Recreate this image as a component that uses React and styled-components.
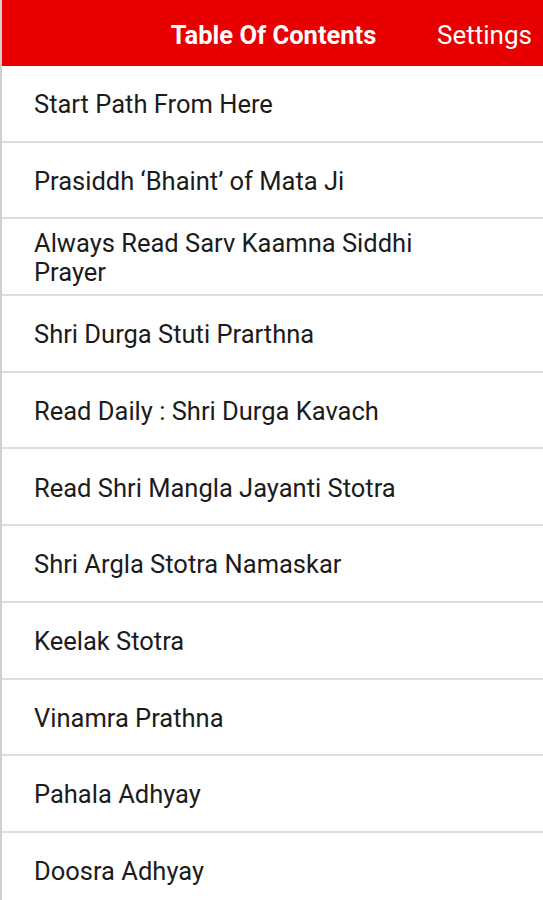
import React from 'react';
import styled, { createGlobalStyle } from 'styled-components';

const items = [
  'Start Path From Here',
  'Prasiddh \u2018Bhaint\u2019 of Mata Ji',
  'Always Read Sarv Kaamna Siddhi Prayer',
  'Shri Durga Stuti Prarthna',
  'Read Daily : Shri Durga Kavach',
  'Read Shri Mangla Jayanti Stotra',
  'Shri Argla Stotra Namaskar',
  'Keelak Stotra',
  'Vinamra Prathna',
  'Pahala Adhyay',
  'Doosra Adhyay',
];

const App = () => (
  <Screen>
    <GlobalStyle />
    <Header>
      <Title>Table Of Contents</Title>
      <SettingsLink>Settings</SettingsLink>
    </Header>
    <List>
      {items.map((item) => (
        <Row key={item}>
          <RowText>{item}</RowText>
        </Row>
      ))}
    </List>
  </Screen>
);

const GlobalStyle = createGlobalStyle`
  body {
    margin: 0;
    background: #fff;
    font-family: Roboto, "Liberation Sans", sans-serif;
    overflow: hidden;
  }
`;

const Screen = styled.div`
  width: 543px;
  height: 900px;
  overflow: hidden;
  border-left: 2px solid #cfcfcf;
  box-sizing: border-box;
`;

const Header = styled.div`
  position: relative;
  height: 66px;
  padding-top: 3px;
  box-sizing: border-box;
  background: #e80000;
  display: flex;
  align-items: center;
  justify-content: center;
  color: #fff;
`;

const Title = styled.div`
  font-size: 25.5px;
  font-weight: 700;
  margin-left: 2px;
`;

const SettingsLink = styled.div`
  position: absolute;
  right: 11px;
  top: 50%;
  transform: translateY(-45%);
  font-size: 26px;
  font-weight: 400;
`;

const List = styled.div`
  display: flex;
  flex-direction: column;
`;

const Row = styled.div`
  height: 76.7px;
  box-sizing: border-box;
  display: flex;
  align-items: center;
  padding: 3px 32px 0;
  border-bottom: 2px solid #dedede;
`;

const RowText = styled.div`
  font-size: 25.5px;
  line-height: 29.5px;
  color: #1c1c1c;
  max-width: 440px;
`;

export default App;
